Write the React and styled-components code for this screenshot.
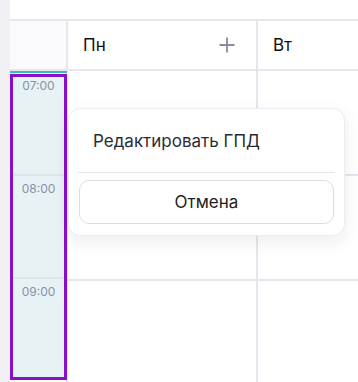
import React from 'react'
import styled, { createGlobalStyle } from 'styled-components'

const Global = createGlobalStyle`
  html, body { margin: 0; padding: 0; background: #f0f0f5; }
  body { font-family: Inter, "Noto Sans", sans-serif; }
`

const hours = ['07:00', '08:00', '09:00']

function App() {
  return (
    <>
      <Global />
      <Page>
        <Board>
          <TopBar />
          <Header>
            <CornerCell />
            <DayCell>
              <span>Пн</span>
              <PlusIcon viewBox="0 0 16 16">
                <path d="M8 0.5v15M0.5 8h15" stroke="#8a8a9c" strokeWidth="1.8" fill="none" />
              </PlusIcon>
            </DayCell>
            <DayCell last>
              <span>Вт</span>
            </DayCell>
          </Header>
          <Body>
            <TimeCol>
              {hours.map((h) => <HourRow key={h} />)}
            </TimeCol>
            <DayCol>
              {hours.map((h) => <HourRow key={h} />)}
            </DayCol>
            <DayCol last>
              {hours.map((h) => <HourRow key={h} />)}
            </DayCol>
            <Selection>
              {hours.map((h) => (
                <SelRow key={h}>
                  <TimeLabel>{h}</TimeLabel>
                </SelRow>
              ))}
            </Selection>
            <Popup>
              <MenuItem>Редактировать ГПД</MenuItem>
              <Divider />
              <CancelButton>Отмена</CancelButton>
            </Popup>
          </Body>
        </Board>
      </Page>
    </>
  )
}

export default App

const Page = styled.div`
  height: 382px;
  padding-left: 10px;
  overflow: hidden;
`

const Board = styled.div`
  background: #fff;
  height: 100%;
  display: flex;
  flex-direction: column;
`

const TopBar = styled.div`
  height: 19px;
  border-bottom: 2px solid #e6e6ee;
  flex-shrink: 0;
`

const Header = styled.div`
  display: grid;
  grid-template-columns: 58px 190px 1fr;
  height: 48px;
  border-bottom: 2px solid #e6e6ee;
  flex-shrink: 0;
`

const CornerCell = styled.div`
  background: #fafafc;
  border-right: 2px solid #e6e6ee;
`

const DayCell = styled.div`
  display: flex;
  align-items: center;
  justify-content: space-between;
  padding: 0 21px 0 15px;
  font-size: 17px;
  color: #111;
  border-right: ${(p) => (p.last ? 'none' : '2px solid #e6e6ee')};
`

const PlusIcon = styled.svg`
  width: 16px;
  height: 16px;
`

const Body = styled.div`
  position: relative;
  display: grid;
  grid-template-columns: 58px 190px 1fr;
  flex: 1;
`

const TimeCol = styled.div`
  border-right: 2px solid #e6e6ee;
`

const DayCol = styled.div`
  border-right: ${(p) => (p.last ? 'none' : '2px solid #e6e6ee')};
`

const HourRow = styled.div`
  height: 103px;
  border-bottom: 2px solid #e6e6ee;
`

const TimeLabel = styled.div`
  padding-top: 5px;
  font-size: 12px;
  color: #8a90a8;
`

const Selection = styled.div`
  position: absolute;
  left: 0;
  top: 0;
  width: 57px;
  height: 309px;
  box-sizing: border-box;
  border-top: 2px solid #3cb8c4;
  background: #e7f2f4;
  display: flex;
  flex-direction: column;
  &::after {
    content: '';
    position: absolute;
    inset: 1px 0 0 0;
    border: 3px solid #8a0fc8;
    pointer-events: none;
  }
`

const SelRow = styled.div`
  height: 103px;
  border-bottom: 2px solid #d9e6ec;
  display: flex;
  justify-content: center;
  &:last-child { border-bottom: none; }
`

const Popup = styled.div`
  position: absolute;
  left: 58px;
  top: 37px;
  width: 277px;
  height: 128px;
  box-sizing: border-box;
  background: #fff;
  border: 1px solid #ececf2;
  border-radius: 12px;
  box-shadow: 0 6px 18px rgba(20, 20, 40, 0.08);
  padding: 0 9px 10px;
  display: flex;
  flex-direction: column;
`

const MenuItem = styled.div`
  height: 63px;
  display: flex;
  align-items: center;
  padding-left: 15px;
  font-size: 17px;
  color: #2b2b33;
`

const Divider = styled.div`
  height: 1px;
  background: #e6e6ee;
`

const CancelButton = styled.div`
  margin: 7px 1px 0;
  height: 44px;
  box-sizing: border-box;
  border: 1px solid #dcdce6;
  border-radius: 10px;
  display: flex;
  align-items: center;
  justify-content: center;
  font-size: 17px;
  color: #1e1e24;
`
